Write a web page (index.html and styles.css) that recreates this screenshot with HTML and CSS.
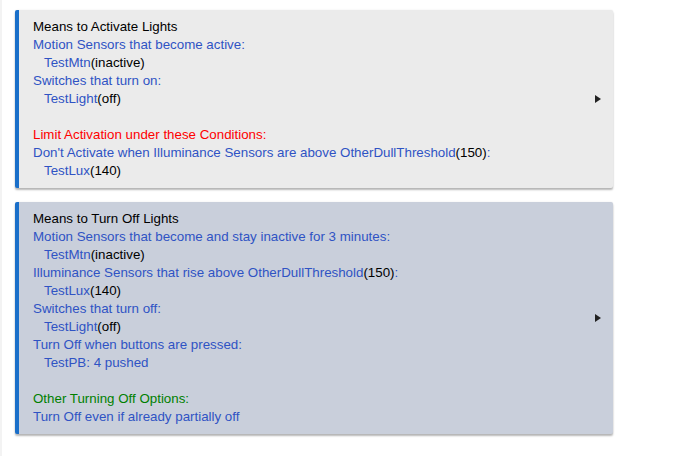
FILE: index.html
```html
<!DOCTYPE html>
<html>
<head>
<meta charset="utf-8">
<link rel="stylesheet" href="styles.css">
</head>
<body>
<div class="page">
  <div class="card card-gray">
    <div class="content">
      <div class="title">Means to Activate Lights</div>
      <div class="blue">Motion Sensors that become active:</div>
      <div class="item"><span class="blue">TestMtn</span>(inactive)</div>
      <div class="blue">Switches that turn on:</div>
      <div class="item"><span class="blue">TestLight</span>(off)</div>
      <div class="blank"></div>
      <div class="red">Limit Activation under these Conditions:</div>
      <div class="blue">Don't Activate when Illuminance Sensors are above OtherDullThreshold<span class="black">(150)</span>:</div>
      <div class="item"><span class="blue">TestLux</span>(140)</div>
    </div>
    <div class="arrow"></div>
  </div>
  <div class="card card-blue">
    <div class="content">
      <div class="title">Means to Turn Off Lights</div>
      <div class="blue">Motion Sensors that become and stay inactive for 3 minutes:</div>
      <div class="item"><span class="blue">TestMtn</span>(inactive)</div>
      <div class="blue">Illuminance Sensors that rise above OtherDullThreshold<span class="black">(150)</span>:</div>
      <div class="item"><span class="blue">TestLux</span>(140)</div>
      <div class="blue">Switches that turn off:</div>
      <div class="item"><span class="blue">TestLight</span>(off)</div>
      <div class="blue">Turn Off when buttons are pressed:</div>
      <div class="item blue">TestPB: 4 pushed</div>
      <div class="blank"></div>
      <div class="green">Other Turning Off Options:</div>
      <div class="blue">Turn Off even if already partially off</div>
    </div>
    <div class="arrow"></div>
  </div>
</div>
</body>
</html>
```
FILE: styles.css
```css
html, body {
  margin: 0;
  padding: 0;
  background: #ffffff;
}
body {
  font-family: "Liberation Sans", Arial, sans-serif;
  font-size: 13.33px;
  line-height: 18px;
  color: #000;
}
.page {
  display: flex;
  flex-direction: column;
  gap: 14px;
  padding: 10px 0 0 13px;
  width: 598px;
  min-height: 456px;
  box-sizing: content-box;
  border-left: 2px solid #f3f3f3;
}
.card {
  display: flex;
  align-items: center;
  border-left: 4px solid #1a6fc9;
  border-radius: 2px;
  box-shadow: 0 2px 2px rgba(0, 0, 0, 0.28), 0 0 2px rgba(0, 0, 0, 0.08);
  padding: 8px 0 8px 14px;
}
.card-gray { background: #ebebeb; }
.card-blue { background: #c9cfdb; }
.content {
  flex: 1;
}
.blank { height: 18px; }
.item { padding-left: 11px; }
.blue { color: #2f53c4; }
.black { color: #000; }
.red { color: #ff0000; }
.green { color: #008000; }
.arrow {
  width: 0;
  height: 0;
  border-top: 4px solid transparent;
  border-bottom: 4px solid transparent;
  border-left: 6px solid #222;
  margin-right: 12px;
}
```
